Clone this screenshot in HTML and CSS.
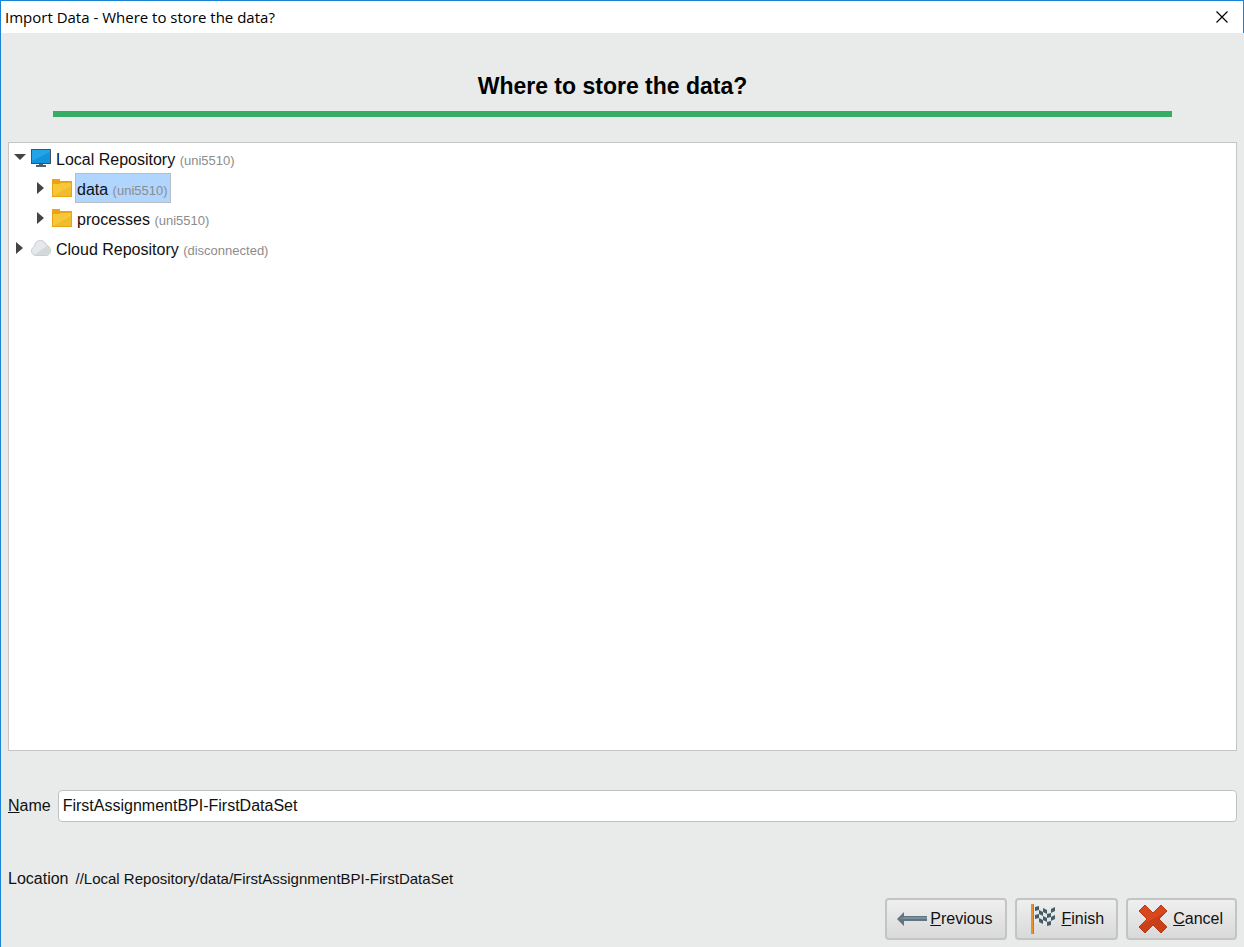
FILE: index.html
```html
<!DOCTYPE html>
<html lang="en">
<head>
    <meta charset="UTF-8">
    <meta name="viewport" content="width=device-width, initial-scale=1.0">
    <title>Import Data - Where to store the data?</title>
    <link rel="stylesheet" href="styles.css">
</head>
<body>
    <header class="title-bar">
        <span class="title-text">Import Data - Where to store the data?</span>
        <button class="close-button" type="button" aria-label="Close">
            <svg width="12" height="12" viewBox="0 0 12 12"><path d="M0.5 0.5L11.5 11.5M11.5 0.5L0.5 11.5" stroke="#000" stroke-width="1.2"/></svg>
        </button>
    </header>

    <main class="dialog">
        <h1 class="heading">Where to store the data?</h1>

        <ul class="tree">
            <li class="row">
                <svg class="arrow" width="12" height="12" viewBox="0 0 12 12"><path d="M0 2H12L6 8Z" fill="#444"/></svg>
                <svg class="icon" width="20" height="18" viewBox="0 0 20 18">
                    <rect width="20" height="15" fill="#3e5560"/>
                    <rect x="1" y="1" width="18" height="13" fill="#1294dc"/>
                    <path d="M1 1H19V3L1 12Z" fill="#24a3e8"/>
                    <path d="M8 15H12V16H15V18H5V16H8Z" fill="#4c626c"/>
                </svg>
                <span class="label">Local Repository <small>(uni5510)</small></span>
            </li>
            <li class="row child">
                <svg class="arrow" width="12" height="12" viewBox="0 0 12 12"><path d="M2 0L9 6L2 12Z" fill="#444"/></svg>
                <svg class="icon" width="20" height="18" viewBox="0 0 20 18">
                    <path d="M0 0H8V2H20V18H0Z" fill="#eba313"/>
                    <path d="M1 5H7L9 4H19V17H1Z" fill="#f6c838"/>
                    <path d="M1 17L19 7V17Z" fill="#f0bb2c"/>
                </svg>
                <span class="label selected">data <small>(uni5510)</small></span>
            </li>
            <li class="row child">
                <svg class="arrow" width="12" height="12" viewBox="0 0 12 12"><path d="M2 0L9 6L2 12Z" fill="#444"/></svg>
                <svg class="icon" width="20" height="18" viewBox="0 0 20 18">
                    <path d="M0 0H8V2H20V18H0Z" fill="#eba313"/>
                    <path d="M1 5H7L9 4H19V17H1Z" fill="#f6c838"/>
                    <path d="M1 17L19 7V17Z" fill="#f0bb2c"/>
                </svg>
                <span class="label">processes <small>(uni5510)</small></span>
            </li>
            <li class="row">
                <svg class="arrow" width="12" height="12" viewBox="0 0 12 12"><path d="M2 0L9 6L2 12Z" fill="#444"/></svg>
                <svg class="icon" width="20" height="18" viewBox="0 0 20 18">
                    <path d="M5 16.5C2 16.5 .5 14.5 .5 12C.5 9.5 2 8 3.5 7.5C3.5 4 6 1.5 9.5 1.5C12.5 1.5 14.5 3 15 6C18 6.5 19.5 9 19.5 11.5C19.5 14.5 18 16.5 15 16.5Z" fill="#e6e9eb" stroke="#c9ced1"/>
                    <path d="M3 16L16 7C18 8 19 9.5 19 12C19 14.5 17 16 15 16Z" fill="#d3d8da"/>
                </svg>
                <span class="label">Cloud Repository <small>(disconnected)</small></span>
            </li>
        </ul>

        <div class="name-row">
            <label for="name"><u>N</u>ame</label>
            <input id="name" type="text" value="FirstAssignmentBPI-FirstDataSet">
        </div>

        <div class="location-row">
            <span>Location</span>
            <span class="path">//Local Repository/data/FirstAssignmentBPI-FirstDataSet</span>
        </div>

        <div class="buttons">
            <button class="button" type="button">
                <svg width="30" height="32" viewBox="0 0 30 32">
                    <path d="M0 16L7 9V13H30V18H7V23Z" fill="#60757f"/>
                    <path d="M7 14H30V16H2Z" fill="#7a8f99"/>
                </svg>
                <span><u>P</u>revious</span>
            </button>
            <button class="button" type="button">
                <svg width="32" height="32" viewBox="0 0 32 32">
                    <path d="M7 4L12 3L16 5L20 7L24 6L28 4V20L24 22L20 23L16 21L12 19L7 20Z" fill="#e2e9eb"/>
                    <path d="M8 4L12 3V7L8 8ZM16 5L20 7V11L16 9ZM24 6L28 4V8L24 10ZM12 7L16 9V13L12 11ZM20 11L24 10V14L20 15ZM8 12L12 11V15L8 16ZM16 13L20 15V19L16 17ZM24 14L28 12V16L24 18ZM12 15L16 17V21L12 19ZM20 19L24 18V22L20 23Z" fill="#465c66"/>
                    <path d="M4 1H7V31H4Z" fill="#e8912a"/>
                    <path d="M6 1H7V31H6Z" fill="#cc7720"/>
                </svg>
                <span><u>F</u>inish</span>
            </button>
            <button class="button" type="button">
                <svg width="32" height="32" viewBox="0 0 32 32">
                    <path d="M7 2L15 10L23 2L29 8L21 16L29 24L23 30L15 22L7 30L1 24L9 16L1 8Z" fill="#d9481c"/>
                    <path d="M29 8L21 16L29 24L23 30L15 22L7 30L1 24Z" fill="#c83f18"/>
                    <path d="M7 2L15 10L23 2L29 8L21 16L29 24L23 30L15 22L7 30L1 24L9 16L1 8Z" fill="none" stroke="#b93a16"/>
                </svg>
                <span><u>C</u>ancel</span>
            </button>
        </div>
    </main>
</body>
</html>
```
FILE: styles.css
```css
* {
    box-sizing: border-box;
}
body {
    display: flex;
    flex-direction: column;
    height: 100vh;
    margin: 0;
    background: #e8ebea;
    border-top: 1px solid #1883d7;
    border-left: 1px solid #1883d7;
    font-family: "Liberation Sans", Arial, sans-serif;
    font-size: 16px;
    line-height: 20px;
    color: #111;
}
.title-bar {
    display: flex;
    align-items: center;
    justify-content: space-between;
    height: 32px;
    padding: 0 12px 0 4px;
    background: #fff;
    border-right: 1px solid #1883d7;
    font-family: "Open Sans", "Noto Sans", sans-serif;
    font-size: 15px;
    color: #000;
}
.close-button {
    display: flex;
    padding: 3px;
    border: 0;
    background: none;
}
.dialog {
    display: flex;
    flex: 1;
    flex-direction: column;
    min-height: 0;
    padding: 37px 7px 7px;
}
.heading {
    margin: 0 65px 25px 45px;
    padding-bottom: 9px;
    border-bottom: 6px solid #36ad64;
    font-size: 23px;
    line-height: 32px;
    text-align: center;
    color: #000;
}
.tree {
    flex: 1;
    margin: 0;
    padding: 0 4px 0 5px;
    border: 1px solid #c4c6c6;
    background: #fff;
    list-style: none;
}
.row {
    display: flex;
    align-items: center;
    height: 30px;
}
.child {
    padding-left: 21px;
}
.arrow {
    margin-right: 5px;
}
.icon {
    margin-right: 3px;
}
.label {
    height: 30px;
    padding: 0 2px 0 1px;
    border: 1px solid transparent;
    line-height: 32px;
    white-space: nowrap;
}
.selected {
    background: #b0d5ff;
    border-color: #b8bec4;
}
.label small {
    font-size: 13px;
    color: #8c8c8c;
}
.name-row {
    display: flex;
    align-items: center;
    gap: 7px;
    margin-top: 39px;
}
.name-row input {
    flex: 1;
    height: 32px;
    padding: 0 4px;
    border: 1px solid #c0c2c2;
    border-radius: 4px;
    background: #fff;
    font: inherit;
    color: inherit;
}
.location-row {
    display: flex;
    gap: 7px;
    margin-top: 47px;
}
.path {
    font-size: 15px;
}
.buttons {
    display: flex;
    justify-content: flex-end;
    gap: 8px;
    margin-top: 9px;
}
.button {
    display: flex;
    align-items: center;
    gap: 3px;
    height: 42px;
    padding: 0 12px 0 10px;
    border: 2px solid #c3c5c5;
    border-radius: 4px;
    background: linear-gradient(#efefef, #d9d9d9);
    font: inherit;
    color: inherit;
}
```
